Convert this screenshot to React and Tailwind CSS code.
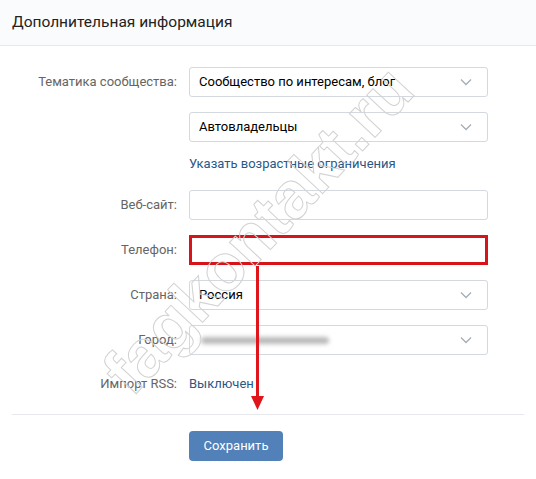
import React from 'react';

const Chevron = () => (
  <svg width="12" height="8" viewBox="0 0 12 8" className="absolute right-[15px] top-1/2 -translate-y-1/2">
    <polyline points="1,1.5 6,6.5 11,1.5" fill="none" stroke="#a6adb6" strokeWidth="1.3" />
  </svg>
);

const Row = ({ label, children, className = '' }) => (
  <div className={`flex items-center ${className}`}>
    <div className="w-[177px] text-right text-[13px] text-[#656565]">{label}</div>
    <div className="ml-3 w-[299px]">{children}</div>
  </div>
);

const Select = ({ value, children }) => (
  <div className="relative h-[30px] border border-[#d3d9de] rounded-[3px] bg-white flex items-center pl-[9px] text-[13px] text-black">
    {value}
    {children}
    <Chevron />
  </div>
);

export default function App() {
  return (
    <div className="relative w-[536px] h-[479px] bg-white overflow-hidden" style={{ fontFamily: 'Roboto, "Open Sans", Arial, sans-serif' }}>
      <div className="h-[46px] px-3 flex items-center bg-[#fafbfc] border-b border-[#e7e8ec] text-[15.5px] text-[#222]">
        Дополнительная информация
      </div>

      <div className="pt-[21px]">
        <Row label="Тематика сообщества:">
          <Select value="Сообщество по интересам, блог" />
        </Row>
        <Row label="" className="mt-[15px]">
          <Select value="Автовладельцы" />
        </Row>
        <Row label="" className="mt-[13px]">
          <div className="h-[18px] leading-[18px] text-[13px] text-[#2a5885]">Указать возрастные ограничения</div>
        </Row>
        <Row label="Веб-сайт:" className="mt-[17px]">
          <div className="h-[30px] border border-[#d3d9de] rounded-[3px] bg-white" />
        </Row>
        <Row label="Телефон:" className="mt-[15px]">
          <div className="h-[30px] border-[3px] border-[#d8141b] bg-white" />
        </Row>
        <Row label="Страна:" className="mt-[15px]">
          <Select value="Россия" />
        </Row>
        <Row label="Город:" className="mt-[15px]">
          <Select>
            <div className="w-[128px] h-[7px] rounded-full bg-[#b9b9b9] blur-[2px] ml-[2px]" />
          </Select>
        </Row>
        <Row label="Импорт RSS:" className="mt-[19px]">
          <div className="h-[18px] leading-[18px] text-[13px] text-[#2a5885]">Выключен</div>
        </Row>
        <div className="mx-3 mt-[20px] border-t border-[#e7e8ec]" />
        <div className="pl-[189px] mt-[16px]">
          <button className="w-[94px] h-[30px] rounded-[4px] bg-[#5181b8] text-white text-[13px]">Сохранить</button>
        </div>
      </div>

      {/* red arrow */}
      <div className="absolute left-[256px] top-[266px] w-[3px] h-[134px] bg-[#e0141b]" />
      <svg className="absolute left-[251px] top-[396px]" width="13" height="14" viewBox="0 0 13 14">
        <polygon points="0,0 13,0 6.5,14" fill="#e0141b" />
      </svg>

      {/* watermark */}
      <div
        className="absolute left-[258px] top-[230px] -translate-x-1/2 -translate-y-1/2 -rotate-[47deg] text-[66px] font-bold whitespace-nowrap text-transparent pointer-events-none [-webkit-text-stroke:1px_#d2d2d2]"
        style={{ fontFamily: '"Liberation Sans", sans-serif' }}
      >
        fagkontakt.ru
      </div>
    </div>
  );
}
